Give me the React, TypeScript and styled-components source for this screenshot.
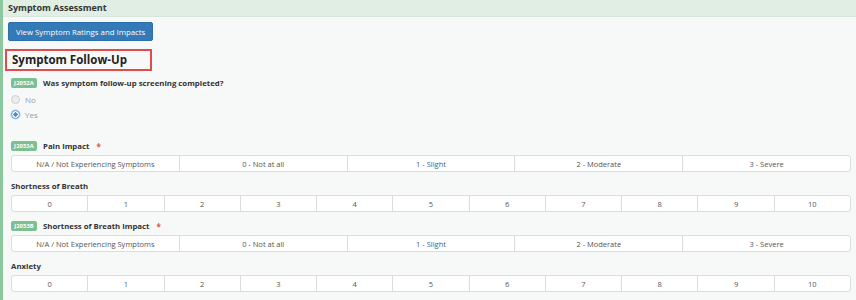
import React, { FC } from 'react';
import styled, { createGlobalStyle } from 'styled-components';

const GlobalStyle = createGlobalStyle`
    body {
        margin: 0;
        background: #f7f8f8;
        font-family: 'Open Sans', 'Liberation Sans', sans-serif;
        color: #333;
    }
`;

const impactOptions = [
    'N/A / Not Experiencing Symptoms',
    '0 - Not at all',
    '1 - Slight',
    '2 - Moderate',
    '3 - Severe',
];

const scaleOptions = ['0', '1', '2', '3', '4', '5', '6', '7', '8', '9', '10'];

type ScaleProps = {
    options: string[];
    highlight?: string;
};

const Scale: FC<ScaleProps> = ({ options, highlight }) => (
    <ScaleRow>
        {options.map((o) => (
            <ScaleCell key={o} $active={o === highlight}>
                {o}
            </ScaleCell>
        ))}
    </ScaleRow>
);

type FieldProps = {
    code?: string;
    label: string;
    required?: boolean;
};

const FieldLabel: FC<FieldProps> = ({ code, label, required }) => (
    <LabelRow>
        {code && <Badge>{code}</Badge>}
        <LabelText>{label}</LabelText>
        {required && <Required>*</Required>}
    </LabelRow>
);

const App: FC = () => (
    <>
        <GlobalStyle />
        <Panel>
            <Header>Symptom Assessment</Header>
            <Body>
                <Button>View Symptom Ratings and Impacts</Button>
                <SectionTitle>Symptom Follow-Up</SectionTitle>
                <Content>
                    <FieldLabel code="J2052A" label="Was symptom follow-up screening completed?" />
                    <Radios>
                        <RadioRow>
                            <Radio />
                            <RadioLabel>No</RadioLabel>
                        </RadioRow>
                        <RadioRow>
                            <Radio $checked />
                            <RadioLabel>Yes</RadioLabel>
                        </RadioRow>
                    </Radios>

                    <Group $first>
                        <FieldLabel code="J2053A" label="Pain Impact" required />
                        <Scale options={impactOptions} highlight="1 - Slight" />
                    </Group>
                    <Group>
                        <FieldLabel label="Shortness of Breath" />
                        <Scale options={scaleOptions} />
                    </Group>
                    <Group>
                        <FieldLabel code="J2053B" label="Shortness of Breath Impact" required />
                        <Scale options={impactOptions} highlight="1 - Slight" />
                    </Group>
                    <Group>
                        <FieldLabel label="Anxiety" />
                        <Scale options={scaleOptions} highlight="1" />
                    </Group>
                </Content>
            </Body>
        </Panel>
    </>
);

const Panel = styled.div`
    border-left: 3px solid #8cc79e;
    min-height: 300px;
    box-sizing: border-box;
`;

const Header = styled.div`
    height: 17px;
    line-height: 16px;
    padding-left: 5px;
    background: #e0eee3;
    border-bottom: 1px solid #d6e6da;
    box-sizing: border-box;
    font-size: 9px;
    font-weight: 700;
    color: #333;
`;

const Body = styled.div`
    padding: 5px 5px 0 5px;
`;

const Button = styled.button`
    display: block;
    height: 19px;
    padding: 0 7px;
    border: 1px solid #2a6fae;
    border-radius: 2px;
    background: #337ab7;
    color: #fff;
    font-family: inherit;
    font-size: 7.8px;
    cursor: pointer;
`;

const SectionTitle = styled.h2`
    margin: 8px 0 0 -3px;
    width: 147px;
    height: 22px;
    box-sizing: border-box;
    border: 2px solid #e24b4b;
    padding-left: 5px;
    line-height: 18px;
    font-size: 11.5px;
    font-weight: 700;
    color: #222;
`;

const Content = styled.div`
    padding: 7px 0 0 3px;
`;

const LabelRow = styled.div`
    display: flex;
    align-items: center;
    height: 10px;
    gap: 6px;
`;

const Badge = styled.span`
    display: inline-flex;
    align-items: center;
    justify-content: center;
    height: 10px;
    padding: 0 3px;
    min-width: 26px;
    box-sizing: border-box;
    border-radius: 2px;
    background: #7dbf90;
    color: #fff;
    font-size: 5.8px;
    font-weight: 700;
    letter-spacing: 0.1px;
`;

const LabelText = styled.span`
    font-size: 7.8px;
    font-weight: 700;
    color: #333;
`;

const Required = styled.span`
    color: #e05252;
    font-size: 8px;
    font-weight: 700;
    margin-left: 1px;
`;

const Radios = styled.div`
    margin-top: 4px;
    display: flex;
    flex-direction: column;
`;

const RadioRow = styled.label`
    display: flex;
    align-items: center;
    gap: 5px;
    height: 15px;
`;

const Radio = styled.span<{ $checked?: boolean }>`
    width: 9px;
    height: 9px;
    box-sizing: border-box;
    border-radius: 50%;
    border: 1px solid ${({ $checked }) => ($checked ? '#5b95cf' : '#cfcfcf')};
    background: ${({ $checked }) =>
        $checked ? 'radial-gradient(circle, #4a8fd4 0 2px, #fff 2.3px)' : '#ececec'};
    box-shadow: ${({ $checked }) => ($checked ? '0 0 0 0.5px #a9c8e8' : 'none')};
`;

const RadioLabel = styled.span`
    font-size: 8px;
    color: #9a9a9a;
`;

const Group = styled.div<{ $first?: boolean }>`
    margin-top: ${({ $first }) => ($first ? '19px' : '9px')};
    display: flex;
    flex-direction: column;
    gap: 4px;
`;

const ScaleRow = styled.div`
    display: flex;
    width: 840px;
    height: 17px;
    box-sizing: border-box;
    border: 1px solid #dcdcdc;
    border-radius: 3px;
    background: #fff;
    overflow: hidden;
`;

const ScaleCell = styled.div<{ $active?: boolean }>`
    flex: 1 1 0;
    display: flex;
    align-items: center;
    justify-content: center;
    font-size: 7.5px;
    color: ${({ $active }) => ($active ? '#44618a' : '#555')};

    & + & {
        border-left: 1px solid #dcdcdc;
    }
`;

export default App;
